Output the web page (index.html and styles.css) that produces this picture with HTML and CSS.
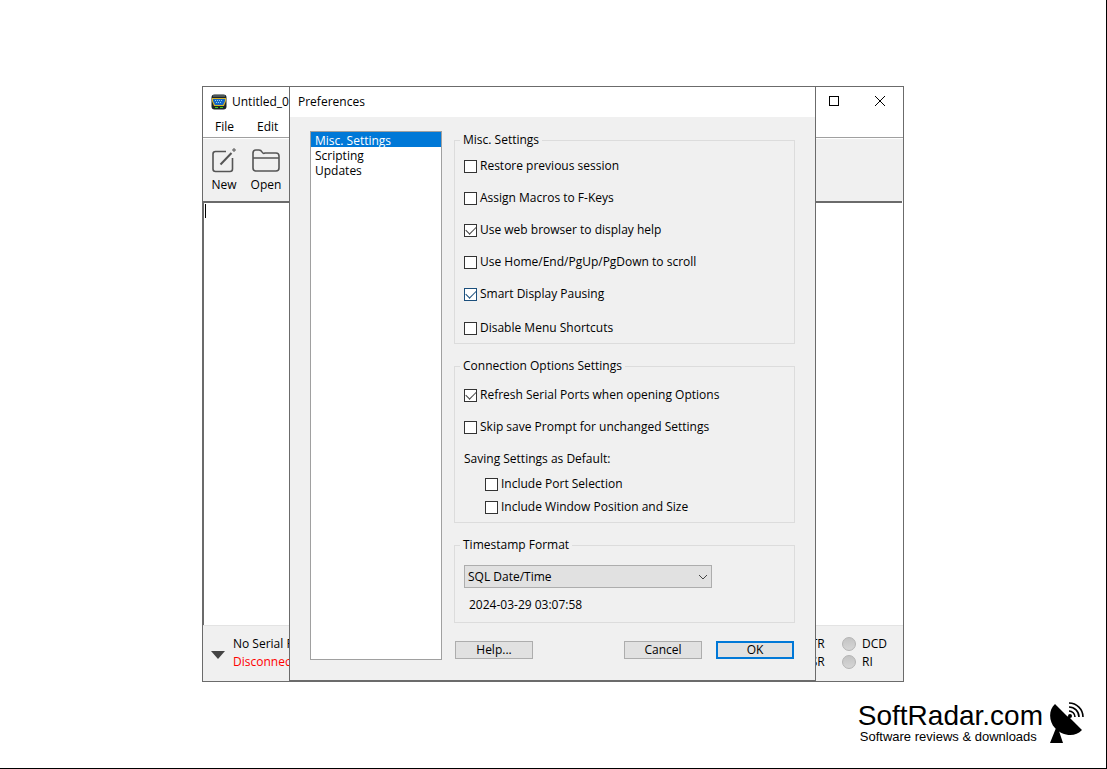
FILE: index.html
```
<!DOCTYPE html>
<html lang="en">
<head>
    <meta charset="UTF-8">
    <meta name="viewport" content="width=device-width, initial-scale=1.0">
    <title>Preferences</title>
    <link rel="stylesheet" href="styles.css">
</head>
<body>
    <div class="desktop">
        <main class="window">
            <header class="titlebar">
                <svg class="app-icon" width="16" height="16" viewBox="0 0 16 16">
                    <rect x="0.5" y="0.5" width="15" height="15" rx="3" fill="#1c2426"/>
                    <rect x="2" y="1" width="12" height="2" fill="#4b5558"/>
                    <path d="M1 4h14v3l-2 5H3L1 7z" fill="#d8b52c"/>
                    <path d="M2 5h12v2l-2 4H4L2 7z" fill="#1467c8"/>
                    <path d="M4 6.5h8M5 8.5h6" stroke="#8fd0f0" stroke-dasharray="1 1"/>
                    <path d="M4 13.5h3M9 13.5h3" stroke="#3fd21f"/>
                </svg>
                <span class="title">Untitled_0</span>
                <button class="caption-button" aria-label="Maximize">
                    <svg width="12" height="12" viewBox="0 0 12 12"><rect x="1.5" y="1.5" width="9" height="9" fill="none" stroke="#000"/></svg>
                </button>
                <button class="caption-button" aria-label="Close">
                    <svg width="12" height="12" viewBox="0 0 12 12"><path d="M1 1l10 10M11 1L1 11" stroke="#000"/></svg>
                </button>
            </header>
            <nav class="menubar">
                <a href="#">File</a>
                <a href="#">Edit</a>
            </nav>
            <div class="toolbar">
                <button class="tool">
                    <svg width="30" height="26" viewBox="0 0 30 26" fill="none" stroke="#555" stroke-width="1.6">
                        <path d="M17 4.500H6.500Q4 4.500 4 7V22Q4 24.500 6.500 24.500H21Q23.500 24.500 23.500 22V11"/>
                        <path d="M11.500 17.500L22.500 6" stroke-width="2"/>
                        <path d="M23 3h4M25 1v4" stroke-width="1"/>
                    </svg>
                    New
                </button>
                <button class="tool">
                    <svg width="30" height="26" viewBox="0 0 30 26" fill="none" stroke="#555" stroke-width="1.6">
                        <path d="M2 21V6Q2 3 5 3H8Q10 3 11 5T14 6H25Q28 6 28 9V21Q28 24 25 24H5Q2 24 2 21zM2 11H28"/>
                    </svg>
                    Open
                </button>
            </div>
            <textarea class="terminal" aria-label="Terminal"></textarea>
            <footer class="statusbar">
                <button class="expand" aria-label="Show connection list">
                    <svg width="14" height="8" viewBox="0 0 14 8"><path d="M0 0h14L7 8z" fill="#444"/></svg>
                </button>
                <div class="status">
                    <span>No Serial Port</span>
                    <span class="offline">Disconnected</span>
                </div>
                <div class="signals">
                    <span>DTR</span><i class="led"></i><span>DCD</span>
                    <span>DSR</span><i class="led"></i><span>RI</span>
                </div>
            </footer>
        </main>

        <form class="dialog" role="dialog" aria-labelledby="dialog-title">
            <h1 class="dialog-title" id="dialog-title">Preferences</h1>
            <div class="dialog-body">
                <select class="pages" size="10" aria-label="Settings page">
                    <option selected>Misc. Settings</option>
                    <option>Scripting</option>
                    <option>Updates</option>
                </select>
                <div class="settings">
                    <fieldset class="group misc">
                        <legend>Misc. Settings</legend>
                        <label><input type="checkbox">Restore previous session</label>
                        <label><input type="checkbox">Assign Macros to F-Keys</label>
                        <label><input type="checkbox" checked>Use web browser to display help</label>
                        <label><input type="checkbox">Use Home/End/PgUp/PgDown to scroll</label>
                        <label class="active"><input type="checkbox" checked>Smart Display Pausing</label>
                        <label><input type="checkbox">Disable Menu Shortcuts</label>
                    </fieldset>
                    <fieldset class="group connection">
                        <legend>Connection Options Settings</legend>
                        <label><input type="checkbox" checked>Refresh Serial Ports when opening Options</label>
                        <label><input type="checkbox">Skip save Prompt for unchanged Settings</label>
                        <p>Saving Settings as Default:</p>
                        <div class="defaults">
                            <label><input type="checkbox">Include Port Selection</label>
                            <label><input type="checkbox">Include Window Position and Size</label>
                        </div>
                    </fieldset>
                    <fieldset class="group timestamp">
                        <legend>Timestamp Format</legend>
                        <div class="combo">
                            <select aria-label="Timestamp format">
                                <option>SQL Date/Time</option>
                            </select>
                            <svg class="chevron" width="10" height="6" viewBox="0 0 10 6"><path d="M1 1l4 4 4-4" fill="none" stroke="#444"/></svg>
                        </div>
                        <output>2024-03-29 03:07:58</output>
                    </fieldset>
                    <div class="buttons">
                        <button type="button" class="help">Help...</button>
                        <button type="button">Cancel</button>
                        <button type="button" class="default">OK</button>
                    </div>
                </div>
            </div>
        </form>

        <a class="brand" href="#">
            <span class="brand-text">
                <span class="brand-name">SoftRadar.com</span>
                <span class="brand-tagline">Software reviews &amp; downloads</span>
            </span>
            <svg width="36" height="42" viewBox="0 0 36 42">
                <path d="M6 2C-1 8 0 20 6 26C13 34 26 36 33 28L21 16L18 14z"/>
                <path d="M7 26L1 41H14L10 29z"/>
                <path d="M17 19L21 14" stroke="#000" stroke-width="2"/>
                <circle cx="21" cy="14" r="2"/>
                <path d="M20 9A6 6 0 0 1 26 15M20 5A10 10 0 0 1 30 15M20 1A14 14 0 0 1 34 15" fill="none" stroke="#000" stroke-width="1.600"/>
            </svg>
        </a>
    </div>
</body>
</html>
```
FILE: styles.css
```
* {
    box-sizing: border-box;
}
body {
    margin: 0;
    font-family: "Open Sans", "Noto Sans", sans-serif;
    font-size: 12px;
    line-height: 16px;
    color: #000;
    background: #fff;
}
button, select, textarea {
    font: inherit;
    color: inherit;
}
a {
    color: inherit;
    text-decoration: none;
}
.desktop {
    position: relative;
    min-height: 100vh;
    border-right: 1px solid #000;
    border-bottom: 1px solid #000;
}

/* main window */
.window {
    position: absolute;
    inset: 86px 202px 86px 202px;
    display: flex;
    flex-direction: column;
    border: 1px solid #6b6b6b;
    background: #fff;
}
.titlebar {
    display: flex;
    align-items: center;
    height: 29px;
    padding-left: 8px;
}
.title {
    flex: 1;
    padding-left: 5px;
}
.caption-button {
    align-self: flex-start;
    width: 46px;
    height: 28px;
    padding: 0;
    border: 0;
    background: none;
}
.caption-button svg {
    display: block;
    margin: 0 auto;
}
.menubar {
    display: flex;
    gap: 23px;
    height: 22px;
    padding: 3px 12px;
    border-bottom: 1px solid #a0a0a0;
}
.toolbar {
    display: flex;
    height: 62px;
    margin-top: 1px;
    background: #f0f0f0;
}
.tool {
    width: 42px;
    padding: 0 0 1px;
    border: 0;
    background: none;
}
.tool svg {
    display: block;
    margin: 0 auto 4px;
}
/* the gradient is the text cursor */
.terminal {
    flex: 1;
    margin-right: 1px;
    border: 0;
    border-top: 2px solid #6b6b6b;
    border-left: 1px solid #6b6b6b;
    outline: 0;
    resize: none;
    background: linear-gradient(#000, #000) 1px 1px / 1px 14px no-repeat #fff;
}
.statusbar {
    display: flex;
    align-items: center;
    height: 56px;
    padding-bottom: 2px;
    border-top: 1px solid #e3e3e3;
    background: #f0f0f0;
}
.expand {
    width: 30px;
    padding: 4px 0 0 8px;
    border: 0;
    background: none;
}
.expand svg {
    display: block;
}
.status {
    display: grid;
    flex: 1;
    gap: 2px;
}
.offline {
    color: #f00;
}
.signals {
    display: grid;
    grid-template-columns: 34px 14px 24px;
    align-items: center;
    gap: 2px 6px;
    padding-right: 17px;
}
.led {
    width: 14px;
    height: 14px;
    border: 1px solid #b4b4b4;
    border-radius: 50%;
    background: linear-gradient(#c4c4c4, #d6d6d6);
}

/* preferences dialog */
.dialog {
    position: absolute;
    top: 86px;
    left: 289px;
    right: 290px;
    border: 1px solid #6b6b6b;
    background: #f0f0f0;
}
.dialog-title {
    margin: 0;
    padding: 7px 8px;
    font-size: 12px;
    font-weight: normal;
    background: #fff;
}
.dialog-body {
    display: flex;
    gap: 12px;
    padding: 14px 20px 20px;
}
.pages {
    width: 132px;
    padding: 0;
    border: 1px solid #a0a0a0;
    border-radius: 0;
    outline: 0;
    background: #fff;
    overflow: hidden;
}
.pages option {
    height: 15px;
    min-height: 0;
    padding: 0 4px;
    line-height: 15px;
}
.pages option:checked {
    color: #fff;
    background: #0078d7 linear-gradient(#0078d7, #0078d7);
}
.settings {
    flex: 1;
    padding-top: 1px;
}
.group {
    display: flex;
    flex-direction: column;
    margin: 0 0 14px;
    padding: 0 9px;
    border: 1px solid #dcdcdc;
}
.group legend {
    margin-left: -4px;
    padding: 0 3px;
}
.group label {
    display: flex;
    align-items: center;
    gap: 3px;
}
.group input {
    appearance: none;
    width: 13px;
    height: 13px;
    margin: 0;
    border: 1px solid #333;
    background: #fff;
}
.group input:checked::before {
    content: "";
    display: block;
    width: 9px;
    height: 5px;
    margin: 1px;
    border: solid #444;
    border-width: 0 0 1px 1px;
    transform: rotate(-45deg);
}
.active input, .active input:checked::before {
    border-color: #1b4f7c;
}
.misc {
    gap: 16px;
    padding-top: 10px;
    padding-bottom: 7px;
}
.misc label:last-child {
    padding-top: 2px;
}
.connection {
    gap: 16px;
    padding-top: 13px;
    padding-bottom: 7px;
}
.connection p {
    margin: 0;
}
.defaults {
    display: grid;
    gap: 7px;
    margin-top: -7px;
    padding-left: 21px;
}
.timestamp {
    padding-top: 12px;
    padding-bottom: 9px;
}
.combo {
    display: grid;
    align-items: center;
    width: 248px;
}
.combo select {
    grid-area: 1 / 1;
    appearance: none;
    height: 23px;
    padding: 0 3px;
    border: 1px solid #adadad;
    border-radius: 0;
    background: #e1e1e1;
}
.chevron {
    grid-area: 1 / 1;
    justify-self: end;
    margin-right: 4px;
    pointer-events: none;
}
.timestamp output {
    padding: 9px 5px 0;
}
.buttons {
    display: flex;
    gap: 14px;
    padding: 4px 1px 1px;
}
.buttons button {
    width: 78px;
    height: 18px;
    padding: 0;
    border: 1px solid #adadad;
    line-height: 16px;
    background: #e1e1e1;
}
.buttons .default {
    border: 2px solid #0078d7;
    line-height: 14px;
}
.buttons .help {
    margin-right: auto;
}

.brand {
    position: absolute;
    right: 21px;
    bottom: 24px;
    display: flex;
    align-items: center;
    gap: 6px;
    font-family: "Liberation Sans", Arial, sans-serif;
}
.brand-text {
    display: grid;
}
.brand-name {
    font-size: 28px;
    line-height: 28px;
}
.brand-tagline {
    padding-left: 2px;
    font-size: 13px;
    line-height: 14px;
}
```
